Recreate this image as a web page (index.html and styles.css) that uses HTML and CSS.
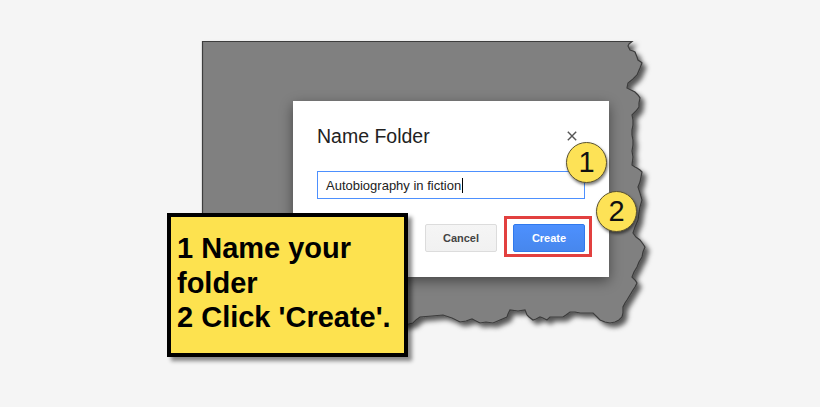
FILE: index.html
```html
<!DOCTYPE html>
<html lang="en">
<head>
    <meta charset="UTF-8">
    <meta name="viewport" content="width=device-width, initial-scale=1.0">
    <title>Name Folder</title>
    <link rel="stylesheet" href="styles.css">
</head>
<body>
    <div class="scene">
        <div class="paper">
            <!-- torn-off piece of the screen behind the dialog -->
            <svg class="paper-bg" width="446" height="290" viewBox="0 0 446 290">
                <defs>
                    <filter id="torn-shadow" x="-10%" y="-10%" width="130%" height="130%">
                        <feDropShadow dx="4" dy="4" stdDeviation="2.5" flood-color="#000" flood-opacity="0.65"/>
                    </filter>
                </defs>
                <path filter="url(#torn-shadow)" fill="#808080" stroke="#3c3c3c" stroke-width="1.2"
                      d="M0.5,0.5 H430 L427,3 426,5 428,9 431,10 433,11 435,16 436,19 439,21 440,22 438,27 435,34 431,38 426,42 425,47 429,49 433,51 436,54 438,57 437,62 437,66 434,70 430,74 431,79 431,84 430,89 430,94 431,99 431,104 430,110 431,116 430,124 433,126 435,127 438,129 440,131 439,136 438,141 436,146 438,152 440,159 438,166 437,172 436,179 433,186 431,192 434,196 438,199 441,203 443,206 441,211 440,216 437,221 435,226 432,231 430,236 433,239 435,242 433,246 431,249 428,254 425,259 423,262 421,266 421,272 420,276 417,279 413,281 408,282 403,281 398,279 394,275 391,272 385,272 378,272 373,271 368,271 364,274 361,276 355,276 348,276 345,279 341,277 338,276 334,278 331,279 327,276 325,274 323,269 316,270 308,269 306,273 305,276 298,279 291,282 284,281 278,282 274,280 270,278 264,280 258,281 250,277 241,274 230,275 218,276 214,279 211,282 203,284 0.5,284 Z"/>
            </svg>

            <div class="dialog">
                <div class="dialog-head">
                    <h1 class="dialog-title">Name Folder</h1>
                    <svg class="close" width="10" height="10" viewBox="0 0 10 10">
                        <path d="M0.8,0.8 L9.2,9.2 M9.2,0.8 L0.8,9.2" stroke="#555" stroke-width="1.4" fill="none"/>
                    </svg>
                </div>
                <div class="field">Autobiography in fiction<span class="caret"></span></div>
                <div class="actions">
                    <button class="btn">Cancel</button>
                    <button class="btn btn-primary highlight">Create</button>
                </div>

                <span class="step step-one">1</span>
                <span class="step step-two">2</span>
            </div>
        </div>

        <div class="callout">
            1 Name your folder<br>
            2 Click 'Create'.
        </div>
    </div>
</body>
</html>
```

FILE: styles.css
```css
body {
    margin: 0;
    background-color: #f5f5f5;
    font-family: "Liberation Sans", Arial, sans-serif;
}

.scene {
    position: relative;
    width: 820px;
    height: 407px;
    padding: 41px 0 0 202px;
    box-sizing: border-box;
}

.paper {
    position: relative;
    width: 446px;
    height: 290px;
    padding: 60px 0 0 91px;
    box-sizing: border-box;
}

.paper-bg {
    position: absolute;
    left: 0;
    top: 0;
    overflow: visible;
}

.dialog {
    position: relative;
    width: 316px;
    padding: 24px 24px 25px;
    box-sizing: border-box;
    background-color: #fff;
    box-shadow: 0 4px 12px rgba(0, 0, 0, 0.45);
}

.dialog-head {
    display: flex;
    justify-content: space-between;
    align-items: center;
}

.dialog-title {
    margin: 0;
    font-size: 19.5px;
    font-weight: normal;
    line-height: 22px;
    color: #222;
}

.close {
    margin-right: 8px;
}

.field {
    display: flex;
    align-items: center;
    height: 28px;
    margin-top: 24px;
    padding-left: 8px;
    border: 1px solid #4d90fe;
    box-sizing: border-box;
    font-size: 13px;
    color: #222;
}

.caret {
    display: inline-block;
    width: 1px;
    height: 15px;
    margin-left: 1px;
    background-color: #000;
}

.actions {
    display: flex;
    justify-content: flex-end;
    gap: 16px;
    margin-top: 25px;
}

.btn {
    position: relative;
    min-width: 72px;
    height: 28px;
    padding: 0 8px;
    border: 1px solid #dcdcdc;
    border-radius: 2px;
    background: linear-gradient(#f5f5f5, #f1f1f1);
    color: #444;
    font-family: "Liberation Sans", Arial, sans-serif;
    font-size: 11px;
    font-weight: bold;
}

.btn-primary {
    border-color: #3079ed;
    background: linear-gradient(#4d90fe, #4787ed);
    color: #fff;
}

/* red frame drawn round the button to point at it */
.highlight::after {
    content: "";
    position: absolute;
    top: -9px;
    right: -8px;
    bottom: -6px;
    left: -10px;
    border: 3px solid #e2403f;
}

.step {
    position: absolute;
    width: 41px;
    height: 41px;
    border: 1px solid #5a5230;
    border-radius: 50%;
    box-sizing: border-box;
    background-color: #fde256;
    box-shadow: 1px 2px 3px rgba(0, 0, 0, 0.5);
    font-size: 29px;
    line-height: 39px;
    text-align: center;
    color: #111;
}

.step-one {
    left: 273px;
    top: 41px;
}

.step-two {
    left: 303px;
    top: 90px;
}

.callout {
    position: absolute;
    left: 167px;
    top: 213px;
    width: 241px;
    height: 144px;
    padding: 14px 6px;
    box-sizing: border-box;
    border: 4px solid #000;
    background-color: #fde24f;
    box-shadow: 4px 4px 4px rgba(0, 0, 0, 0.45);
    font-size: 29px;
    font-weight: bold;
    line-height: 34.5px;
    color: #000;
}
```
